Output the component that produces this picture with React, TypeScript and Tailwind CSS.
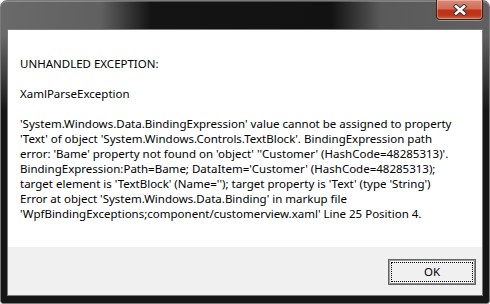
const LINES = [
  "UNHANDLED EXCEPTION:",
  "",
  "XamlParseException",
  "",
  "'System.Windows.Data.BindingExpression' value cannot be assigned to property",
  "'Text' of object 'System.Windows.Controls.TextBlock'. BindingExpression path",
  "error: 'Bame' property not found on 'object' ''Customer' (HashCode=48285313)'.",
  "BindingExpression:Path=Bame; DataItem='Customer' (HashCode=48285313);",
  "target element is 'TextBlock' (Name=''); target property is 'Text' (type 'String')",
  "Error at object 'System.Windows.Data.Binding' in markup file",
  "'WpfBindingExceptions;component/customerview.xaml' Line 25 Position 4.",
];

function CloseGlyph() {
  return (
    <svg width="14" height="12" viewBox="0 0 14 12">
      <path d="M3 2.5 L11 9.5 M11 2.5 L3 9.5" stroke="#3a3a3a" strokeWidth="4.6" strokeLinecap="square" fill="none" />
      <path d="M3 2.5 L11 9.5 M11 2.5 L3 9.5" stroke="#ffffff" strokeWidth="2.6" strokeLinecap="square" fill="none" />
    </svg>
  );
}

export default function App() {
  return (
    <div className="relative h-[304px] w-[490px] overflow-hidden bg-white font-['Noto_Sans','Liberation_Sans',sans-serif]">
      {/* window frame */}
      <div className="flex h-full flex-col rounded-t-[7px] rounded-b-[3px] border border-[#7a7a7a] bg-[linear-gradient(to_bottom,rgba(22,22,22,0)_0px,rgba(22,22,22,0)_34px,#161616_110px),linear-gradient(to_right,#6a6a6a_0px,#606060_100px,#141414_150px,#121212_330px,#5a5a5a_380px,#606060_490px)] shadow-[inset_0_1px_0_rgba(255,255,255,0.25)]">
        <div className="h-[28px] shrink-0" />

        {/* client area */}
        <div className="mx-[6px] flex flex-1 flex-col border border-[#7b7b7b]">
          <div className="h-[217px] bg-white pl-[12px] pt-[26px] text-[11.5px] leading-[15px] text-black">
            {LINES.map((line, i) => (
              <div key={i} className="h-[15px] whitespace-nowrap">
                {line}
              </div>
            ))}
          </div>
          <div className="flex flex-1 justify-end bg-[#f0f0f0] pr-[6px] pt-[12px]">
            <button className="flex h-[26px] w-[88px] items-center justify-center border border-[#646464] bg-[#f0f0f0] p-[2px] shadow-[inset_1px_1px_0_#a0a0a0,inset_-1px_-1px_0_#8c8c8c]">
              <span className="flex h-full w-full items-center justify-center border border-dotted border-black text-[11.5px] text-black">
                OK
              </span>
            </button>
          </div>
        </div>

        <div className="h-[7px] shrink-0" />
      </div>

      {/* close button */}
      <div className="absolute left-[436px] top-0 flex h-[20px] w-[47px] items-center justify-center rounded-b-[4px] border border-t-0 border-[#4a1d14] bg-[linear-gradient(to_bottom,#d98c7a_0%,#cf6d58_45%,#bb3318_55%,#bf3519_80%,#d8633f_100%)] shadow-[inset_0_0_0_1px_rgba(255,255,255,0.3),0_1px_0_rgba(255,255,255,0.35)]">
        <CloseGlyph />
      </div>
    </div>
  );
}
